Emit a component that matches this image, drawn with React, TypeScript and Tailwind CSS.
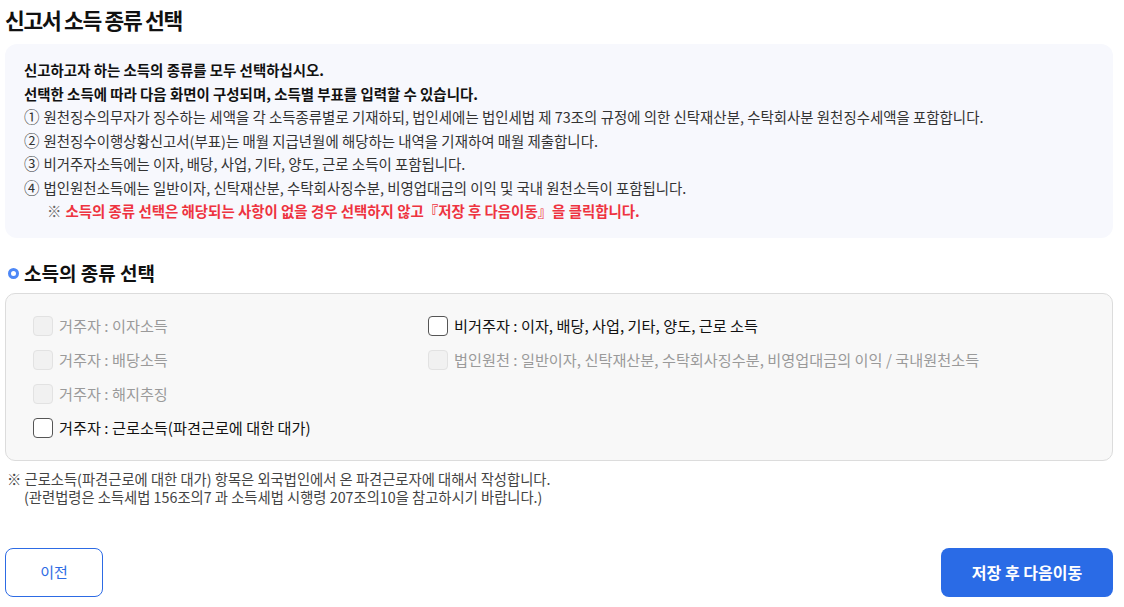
const notes = [
    { no: '①', text: '원천징수의무자가 징수하는 세액을 각 소득종류별로 기재하되, 법인세에는 법인세법 제 73조의 규정에 의한 신탁재산분, 수탁회사분 원천징수세액을 포함합니다.' },
    { no: '②', text: '원천징수이행상황신고서(부표)는 매월 지급년월에 해당하는 내역을 기재하여 매월 제출합니다.' },
    { no: '③', text: '비거주자소득에는 이자, 배당, 사업, 기타, 양도, 근로 소득이 포함됩니다.' },
    { no: '④', text: '법인원천소득에는 일반이자, 신탁재산분, 수탁회사징수분, 비영업대금의 이익 및 국내 원천소득이 포함됩니다.' },
];

const leftItems = [
    { label: '거주자 : 이자소득', disabled: true },
    { label: '거주자 : 배당소득', disabled: true },
    { label: '거주자 : 해지추징', disabled: true },
    { label: '거주자 : 근로소득(파견근로에 대한 대가)', disabled: false },
];

const rightItems = [
    { label: '비거주자 : 이자, 배당, 사업, 기타, 양도, 근로 소득', disabled: false },
    { label: '법인원천 : 일반이자, 신탁재산분, 수탁회사징수분, 비영업대금의 이익 / 국내원천소득', disabled: true },
];

function CheckRow({ label, disabled }: { label: string; disabled: boolean }) {
    return (
        <label className="flex h-[34px] items-center gap-[6px]">
            <span
                className={
                    disabled
                        ? 'h-[20px] w-[20px] shrink-0 rounded-[4px] border border-[#e2e2e2] bg-[#f1f1f1]'
                        : 'h-[20px] w-[20px] shrink-0 rounded-[4px] border border-[#555] bg-white'
                }
            />
            <span className={disabled ? 'text-[15.2px] text-[#9a9a9a]' : 'text-[15.2px] text-[#111]'}>{label}</span>
        </label>
    );
}

export default function App() {
    return (
        <div
            className="min-h-[607px] bg-white pl-[5px] pr-[11px] pt-[4px]"
            style={{ fontFamily: '"Noto Sans CJK KR", "Noto Sans", sans-serif' }}
        >
            <h1 className="h-[32px] text-[21.5px] font-bold leading-[32px] tracking-[-1.3px] text-[#111]">
                신고서 소득 종류 선택
            </h1>

            <div className="mt-[8px] rounded-[12px] bg-[#f7f8fd] pb-[15px] pl-[19px] pr-4 pt-[14px] text-[14.45px] leading-[23.5px] text-[#333]">
                <p className="font-bold text-[#111]">신고하고자 하는 소득의 종류를 모두 선택하십시오.</p>
                <p className="font-bold text-[#111]">선택한 소득에 따라 다음 화면이 구성되며, 소득별 부표를 입력할 수 있습니다.</p>
                {notes.map((n) => (
                    <p key={n.no}>
                        <span className="mr-[4px] text-[15.5px]">{n.no}</span>
                        {n.text}
                    </p>
                ))}
                <p className="pl-[23px]">
                    <span className="mr-[4px] text-[#666]">※</span>
                    <span className="font-bold text-[#ee3340]">
                        소득의 종류 선택은 해당되는 사항이 없을 경우 선택하지 않고『저장 후 다음이동』을 클릭합니다.
                    </span>
                </p>
            </div>

            <div className="mt-[22px] flex h-[28px] items-center gap-[5px] pl-[3px]">
                <span className="h-[11px] w-[11px] rounded-full border-[3px] border-[#4d87f6]" />
                <h2 className="text-[19px] font-bold text-[#111]">소득의 종류 선택</h2>
            </div>

            <div className="mt-[5px] flex rounded-[10px] border border-[#dcdcdc] bg-[#f8f8f8] pb-[15px] pl-[27px] pt-[15px]">
                <div className="w-[395px]">
                    {leftItems.map((it) => (
                        <CheckRow key={it.label} {...it} />
                    ))}
                </div>
                <div>
                    {rightItems.map((it) => (
                        <CheckRow key={it.label} {...it} />
                    ))}
                </div>
            </div>

            <div className="mt-[9px] pl-[2px] text-[14.3px] leading-[18px] text-[#444]">
                <p>※ 근로소득(파견근로에 대한 대가) 항목은 외국법인에서 온 파견근로자에 대해서 작성합니다.</p>
                <p className="pl-[17px]">(관련법령은 소득세법 156조의7 과 소득세법 시행령 207조의10을 참고하시기 바랍니다.)</p>
            </div>

            <div className="mt-[42px] flex items-center justify-between">
                <button className="h-[49px] w-[98px] rounded-[8px] border border-[#2d6be4] bg-white text-[15px] text-[#2d6be4]">
                    이전
                </button>
                <button className="h-[49px] w-[172px] rounded-[8px] bg-[#2a6be6] text-[16px] font-bold text-white">
                    저장 후 다음이동
                </button>
            </div>
        </div>
    );
}
